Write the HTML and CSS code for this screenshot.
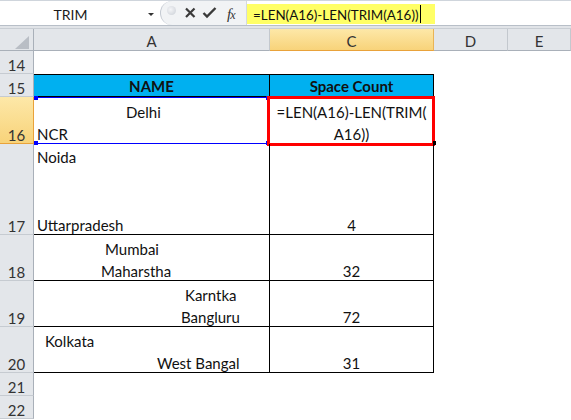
FILE: index.html
```html
<!DOCTYPE html>
<html>
<head>
<meta charset="utf-8">
<link rel="stylesheet" href="styles.css">
</head>
<body>
<div class="fbar">
  <div class="namebox"><span class="nm">TRIM</span><span class="dd"></span></div>
  <div class="btns">
    <span class="grip"></span>
    <svg class="ico" width="60" height="24" viewBox="0 0 60 24">
      <path d="M21 7.5 L29.5 16 M29.5 7.5 L21 16" stroke="#3a3a3a" stroke-width="2.2" fill="none"/>
      <path d="M38.5 12 L42 15.5 L50.5 7" stroke="#3a3a3a" stroke-width="2.4" fill="none"/>
    </svg>
    <span class="fx">f<span class="x">x</span></span>
  </div>
  <div class="formula"><span class="hl">=LEN(A16)-LEN(TRIM(A16))<span class="caret"></span></span></div>
</div>
<div class="gap"></div>
<div class="sheet">
  <div class="corner"><svg width="34" height="22" viewBox="0 0 34 22"><polygon points="15,20 29,20 29,7" fill="#b9bec5"/></svg></div>
  <div class="ch">A</div>
  <div class="ch sel">C</div>
  <div class="ch">D</div>
  <div class="ch">E</div>

  <div class="rh"><span>14</span></div>
  <div class="blank full"></div>

  <div class="rh"><span>15</span></div>
  <div class="th">NAME</div>
  <div class="th">Space Count</div>
  <div class="blank"></div>

  <div class="rh sel"><span>16</span></div>
  <div class="cell a">
    <p class="ln p-delhi">Delhi</p>
    <p class="ln p-l">NCR</p>
    <span class="rf"><i class="sq tl"></i><i class="sq tr"></i><i class="sq bl"></i><i class="sq br"></i></span>
  </div>
  <div class="cell c">
    <p class="ln ctr">=LEN(A16)-LEN(TRIM(</p>
    <p class="ln ctr">A16))</p>
    <span class="rb"></span>
    <span class="fh"></span>
  </div>
  <div class="blank"></div>

  <div class="rh"><span>17</span></div>
  <div class="cell a split">
    <p class="ln p-l">Noida</p>
    <p class="ln p-l">Uttarpradesh</p>
  </div>
  <div class="cell c"><p class="ln ctr">4</p></div>
  <div class="blank"></div>

  <div class="rh"><span>18</span></div>
  <div class="cell a">
    <p class="ln p-mumbai">Mumbai</p>
    <p class="ln p-mah">Maharstha</p>
  </div>
  <div class="cell c"><p class="ln ctr">32</p></div>
  <div class="blank"></div>

  <div class="rh"><span>19</span></div>
  <div class="cell a">
    <p class="ln p-karn">Karntka</p>
    <p class="ln p-bang">Bangluru</p>
  </div>
  <div class="cell c"><p class="ln ctr">72</p></div>
  <div class="blank"></div>

  <div class="rh"><span>20</span></div>
  <div class="cell a">
    <p class="ln p-kol">Kolkata</p>
    <p class="ln p-wb">West Bangal</p>
  </div>
  <div class="cell c"><p class="ln ctr">31</p></div>
  <div class="blank"></div>

  <div class="rh"><span>21</span></div>
  <div class="blank full"></div>

  <div class="rh"><span>22</span></div>
  <div class="blank full"></div>
</div>
</body>
</html>
```
FILE: styles.css
```css
* { box-sizing: border-box; margin: 0; padding: 0; }
html, body { width: 571px; height: 420px; overflow: hidden; }
body {
  background: #ffffff;
  font-family: Lato, "Liberation Sans", sans-serif;
  font-size: 15px;
  color: #111;
}

/* formula bar */
.fbar {
  display: flex;
  height: 26px;
  border-top: 1px solid #cfd5dc;
  border-bottom: 1px solid #b8bfc8;
  background: #fff;
}
.namebox {
  width: 160px;
  display: flex;
  align-items: center;
  padding-top: 3px;
}
.nm { width: 141px; text-align: center; color: #1b1b1b; font-size: 14px; }
.dd {
  margin-left: 7px;
  width: 0; height: 0;
  border-left: 3px solid transparent;
  border-right: 3px solid transparent;
  border-top: 3px solid #333;
}
.btns {
  width: 86px;
  display: flex;
  align-items: center;
  position: relative;
  background: #f1f3f5;
  border-left: 1px solid #c3c9d1;
  border-radius: 12px 0 0 12px;
}
.grip {
  position: absolute;
  left: 6px;
  top: 5px;
  width: 9px;
  height: 9px;
  border-radius: 50%;
  background: radial-gradient(circle at 40% 40%, #f4f5f7, #c9ced5);
}
.ico { display: block; margin-left: 4px; flex: none; }
.fx {
  font-family: "Liberation Serif", serif;
  font-style: italic;
  font-size: 15px;
  color: #333;
  margin-left: 2px;
  margin-top: 2px;
  letter-spacing: -1px;
}
.fx .x { font-size: 12px; }
.formula {
  flex: 1;
  display: flex;
  align-items: center;
  border-left: 1px solid #d4d9df;
}
.hl {
  display: flex;
  align-items: center;
  background: #ffff66;
  height: 20px;
  width: 188px;
  padding-left: 6px;
  padding-top: 3px;
  margin-top: 1px;
  color: #111;
  font-size: 13.4px;
  white-space: nowrap;
}
.caret {
  display: inline-block;
  width: 1px;
  height: 18px;
  background: #000;
  margin-left: 1px;
  margin-top: -3px;
}
.gap { height: 3px; background: #e1e4e8; border-bottom: 1px solid #c9ced4; }

/* sheet */
.sheet {
  display: grid;
  grid-template-columns: 34px 236px 164px 74px 63px;
  grid-template-rows: 22px 23px 23px 47px 91px 46px 46px 46px 23px 23px;
}
.corner {
  background: #e3e6ea;
  border-right: 1px solid #a9b0b9;
  border-bottom: 1px solid #a9b0b9;
}
.corner svg { display: block; }
.ch {
  background: #e3e6ea;
  border-right: 1px solid #c3c8ce;
  border-bottom: 1px solid #a9b0b9;
  text-align: center;
  line-height: 22px;
  padding-top: 1px;
  color: #333;
  font-size: 15px;
}
.ch.sel {
  background: linear-gradient(#fde8a8, #f8d37a);
  border-right-color: #e9b456;
  border-bottom-color: #e9a23a;
}
.rh {
  background: #e3e6ea;
  border-right: 1px solid #a9b0b9;
  border-bottom: 1px solid #c6cbd1;
  display: flex;
  align-items: flex-end;
  justify-content: center;
  color: #333;
  line-height: 22px;
}
.rh span { margin-bottom: -3px; }
.rh.sel {
  background: linear-gradient(#fde8a8, #f8d37a);
  border-right-color: #e9a23a;
  border-bottom-color: #e9a23a;
}
.blank { grid-column: span 2; }
.blank.full { grid-column: span 4; }

.th {
  background: #00b0f0;
  border-top: 1px solid #000;
  border-bottom: 1px solid #000;
  border-right: 1px solid #000;
  font-weight: bold;
  text-align: center;
  line-height: 21px;
  padding-top: 1px;
  color: #111;
}
.cell {
  position: relative;
  border-right: 1px solid #000;
  border-bottom: 1px solid #000;
  display: flex;
  flex-direction: column;
  justify-content: flex-end;
}
.cell.split { justify-content: space-between; }
.ln { line-height: 22px; white-space: nowrap; }
.ln:last-of-type { margin-bottom: -2px; }
.cell.split .ln:first-of-type { margin-top: 2px; }
.ctr { text-align: center; }
.p-l { padding-left: 3px; }
.p-delhi { padding-left: 92px; }
.p-mumbai { padding-left: 71px; }
.p-mah { padding-left: 67px; }
.p-karn { padding-left: 151px; }
.p-bang { padding-left: 147px; }
.p-kol { padding-left: 11px; }
.p-wb { padding-left: 123px; }

/* range finder on A16 */
.rf {
  position: absolute;
  left: 0; right: 0; top: 0; bottom: -1px;
  border-top: 1px solid #0000ff;
  border-bottom: 1px solid #0000ff;
}
.sq { position: absolute; width: 4px; height: 4px; background: #0000ff; }
.sq.tl { left: 0; top: -2px; }
.sq.tr { right: -1px; top: -2px; }
.sq.bl { left: 0; bottom: -2px; }
.sq.br { right: -1px; bottom: -2px; }

/* active cell red box */
.rb {
  position: absolute;
  left: -3px; right: -2px; top: -1px; bottom: -3px;
  border: 3px solid #ff0000;
}
.fh {
  position: absolute;
  right: -3px; bottom: -2px;
  width: 3px; height: 4px;
  background: #000;
}
```
